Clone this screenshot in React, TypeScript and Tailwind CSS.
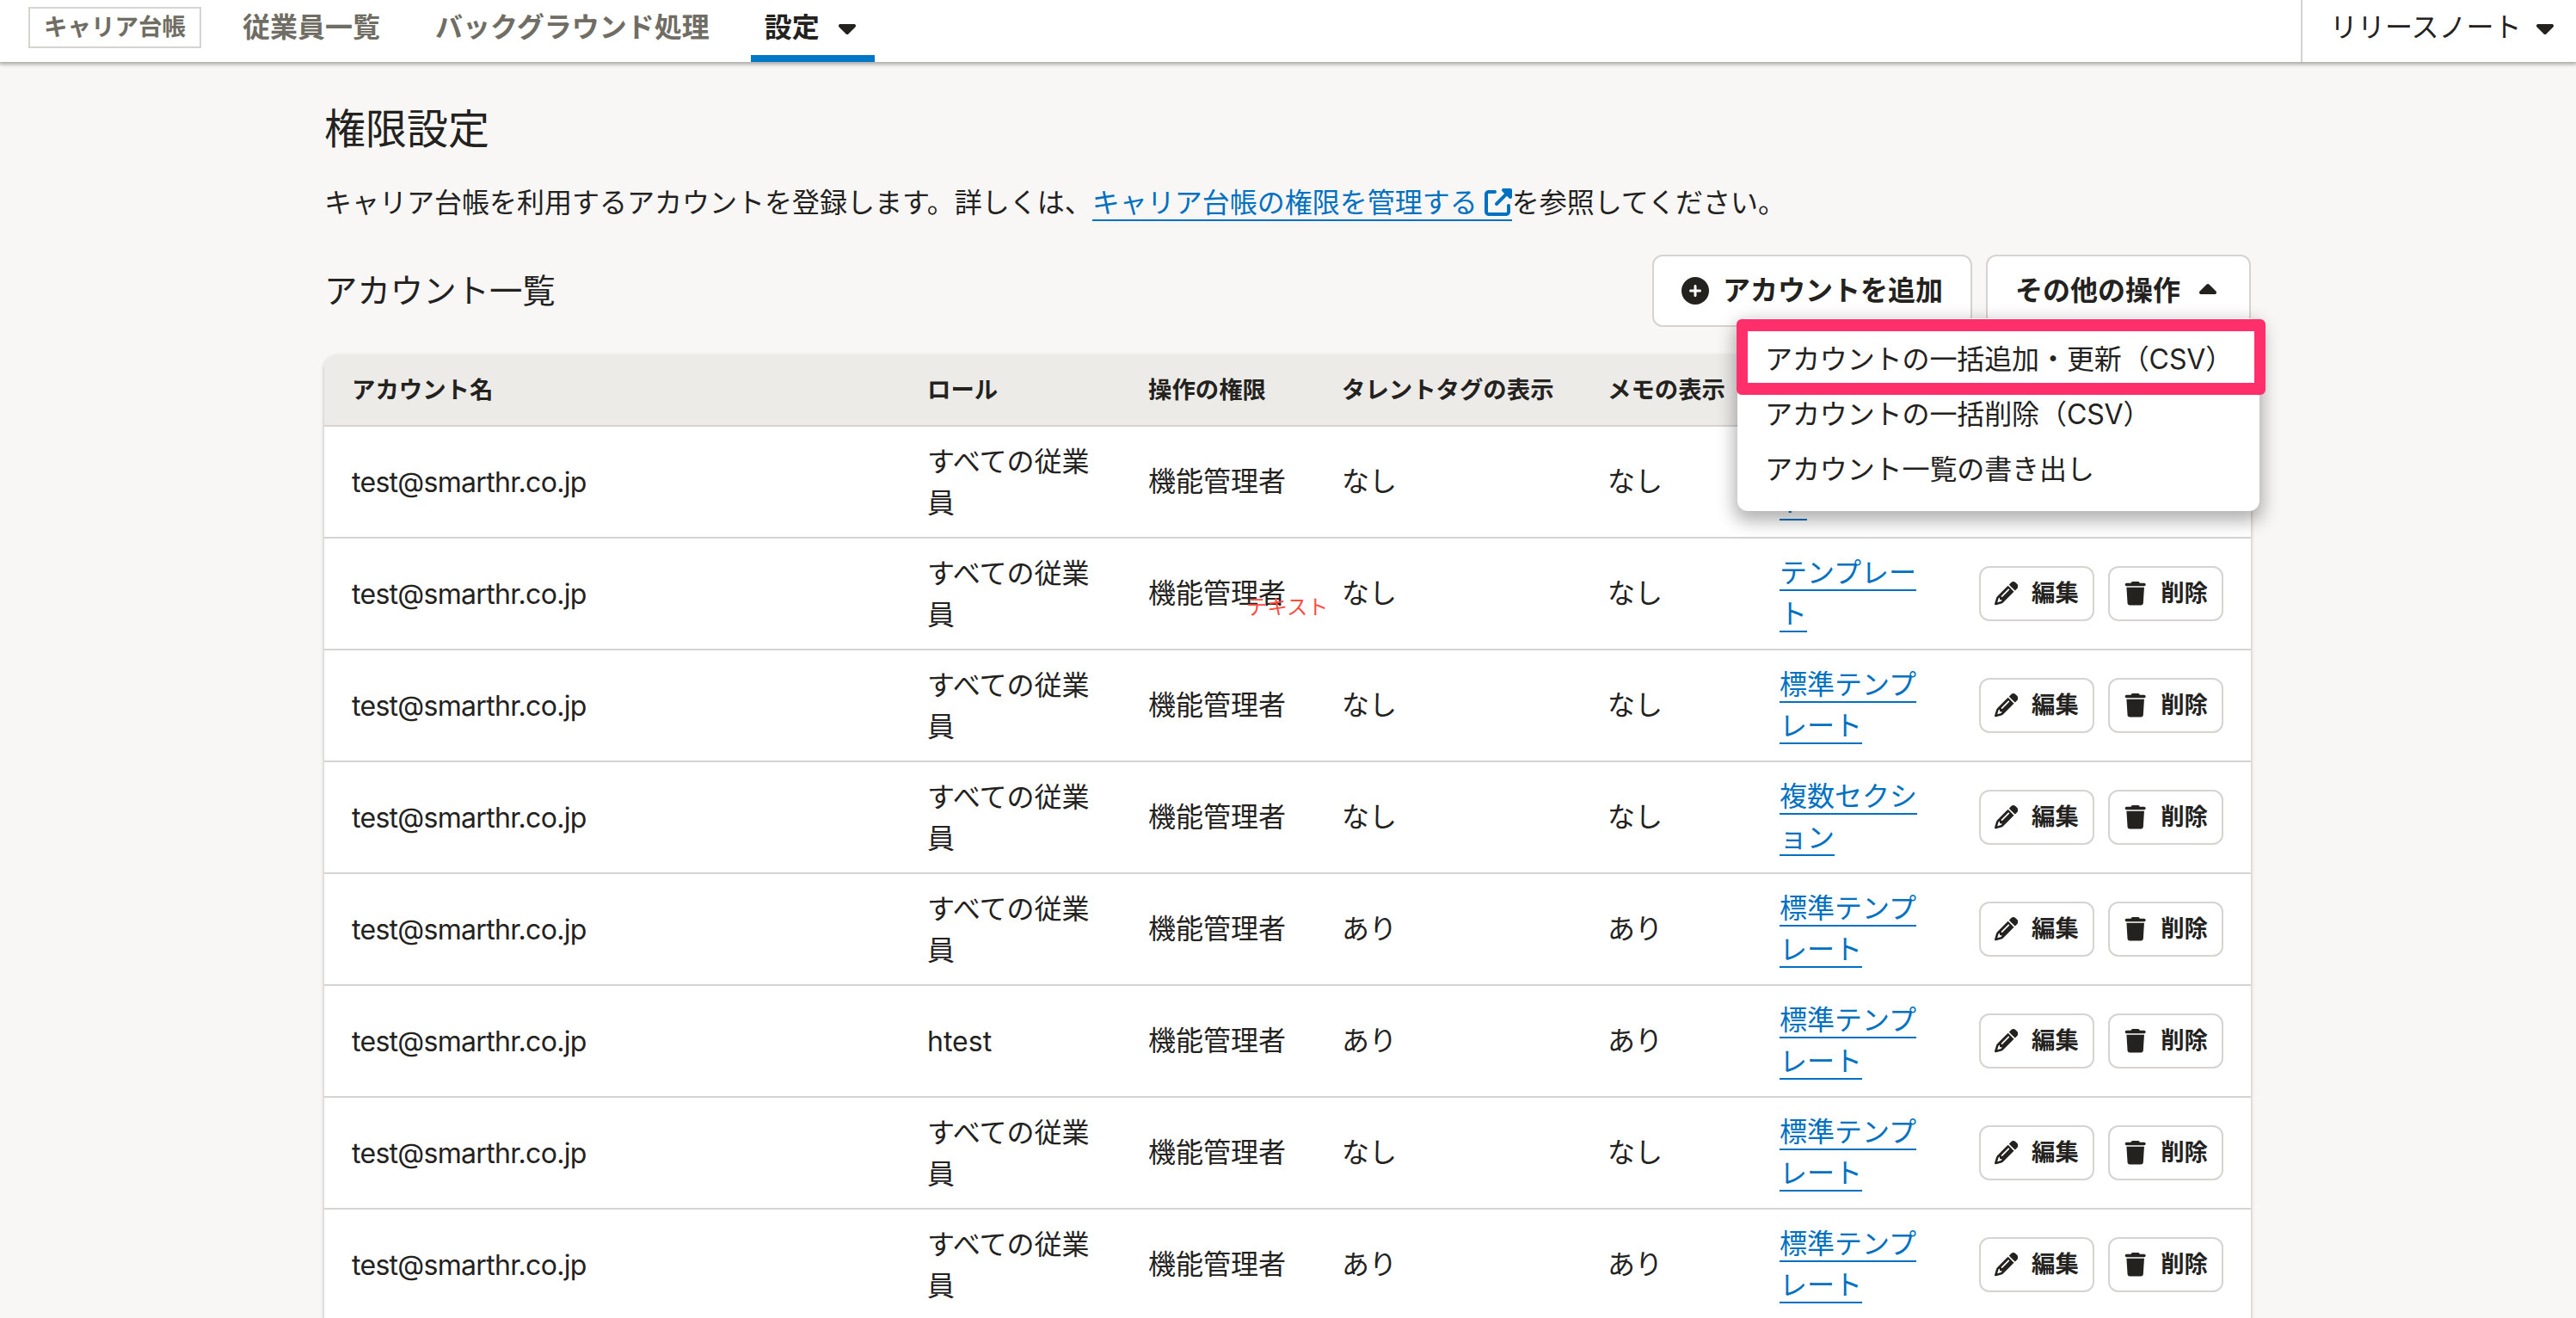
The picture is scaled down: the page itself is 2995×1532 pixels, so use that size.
import { ReactNode } from 'react';
import {
  FaCaretDown,
  FaCaretUp,
  FaCirclePlus,
  FaPencil,
  FaTrash,
  FaUpRightFromSquare,
} from 'react-icons/fa6';

type Account = {
  role: string;
  permission: string;
  talentTag: string;
  memo: string;
  template: string;
};

const columns = [
  'アカウント名',
  'ロール',
  '操作の権限',
  'タレントタグの表示',
  'メモの表示',
  '',
  '',
];

const accounts: Account[] = [
  { role: 'すべての従業員', permission: '機能管理者', talentTag: 'なし', memo: 'なし', template: 'テンプレート' },
  { role: 'すべての従業員', permission: '機能管理者', talentTag: 'なし', memo: 'なし', template: 'テンプレート' },
  { role: 'すべての従業員', permission: '機能管理者', talentTag: 'なし', memo: 'なし', template: '標準テンプレート' },
  { role: 'すべての従業員', permission: '機能管理者', talentTag: 'なし', memo: 'なし', template: '複数セクション' },
  { role: 'すべての従業員', permission: '機能管理者', talentTag: 'あり', memo: 'あり', template: '標準テンプレート' },
  { role: 'htest', permission: '機能管理者', talentTag: 'あり', memo: 'あり', template: '標準テンプレート' },
  { role: 'すべての従業員', permission: '機能管理者', talentTag: 'なし', memo: 'なし', template: '標準テンプレート' },
  { role: 'すべての従業員', permission: '機能管理者', talentTag: 'あり', memo: 'あり', template: '標準テンプレート' },
];

const menuItems = [
  'アカウントの一括追加・更新（CSV）',
  'アカウントの一括削除（CSV）',
  'アカウント一覧の書き出し',
];

function Header() {
  return (
    <header className="relative flex h-[72px] items-stretch bg-white shadow-[0_2px_4px_1px_rgba(3,3,2,0.3)]">
      <div className="flex h-16 items-center pl-[33px]">
        <span className="flex h-12 items-center border-2 border-[#d6d3d0] px-4 text-[27.5px] leading-none font-bold text-[#706d65]">
          キャリア台帳
        </span>
      </div>
      <nav className="ml-8 flex items-stretch font-bold leading-none text-[#706d65]">
        <a href="#" className="flex h-16 items-center px-4">
          従業員一覧
        </a>
        <a href="#" className="ml-8 flex h-16 items-center px-4">
          バックグラウンド処理
        </a>
        <a
          href="#"
          className="ml-8 flex w-36 items-center gap-4 border-b-8 border-[#0077c7] pl-4 text-[#23221e]"
        >
          設定
          <FaCaretDown className="size-8" />
        </a>
      </nav>
      <button className="ml-auto flex w-80 items-center border-l-2 border-[#d6d3d0] pb-2 pl-8 leading-none">
        リリースノート
        <FaCaretDown className="ml-3 size-8" />
      </button>
    </header>
  );
}

function SmallButton({ icon, children }: { icon: ReactNode; children: ReactNode }) {
  return (
    <button className="flex h-16 items-center gap-4 rounded-xl border-2 border-[#d6d3d0] bg-white px-4 text-[27.4px] leading-none font-bold whitespace-nowrap">
      {icon}
      {children}
    </button>
  );
}

function DropdownMenu() {
  return (
    <div className="absolute top-[74px] right-[-10px] z-10 h-56 w-[607px] rounded-xl bg-white pt-4 font-normal shadow-[0_8px_20px_4px_rgba(3,3,2,0.3)]">
      <ul>
        {menuItems.map((item) => (
          <li key={item} className="flex h-16 items-center pl-8 tracking-[-0.1px] whitespace-nowrap">
            {item}
          </li>
        ))}
      </ul>
      <div className="absolute top-px left-[-1px] h-[88px] w-[615px] rounded-md border-[14px] border-x-[13px] border-[#ff2f6c]" />
    </div>
  );
}

function AccountTable() {
  return (
    <div className="overflow-hidden rounded-t-2xl bg-white shadow-[0_2px_4px_rgba(3,3,2,0.3)]">
      <table className="w-full table-fixed border-separate border-spacing-0 text-left">
        <colgroup>
          <col className="w-[669px]" />
          <col className="w-[257px]" />
          <col className="w-[225px]" />
          <col className="w-[309px]" />
          <col className="w-[200px]" />
          <col className="w-[231px]" />
          <col className="w-[349px]" />
        </colgroup>
        <thead>
          <tr className="h-[84px] bg-[#edebe8] text-[27.4px]">
            {columns.map((column, idx) => (
              <th
                key={idx}
                className="border-b-2 border-[#d6d3d0] px-8 py-0 font-bold whitespace-nowrap"
              >
                {column}
              </th>
            ))}
          </tr>
        </thead>
        <tbody className="[&_td]:border-b-2 [&_td]:border-[#d6d3d0] [&_td]:px-8">
          {accounts.map((account, idx) => (
            <tr key={idx} className="h-[130px]">
              <td className="pt-0.5 tracking-[-0.7px]">test@smarthr.co.jp</td>
              <td className="pt-px">{account.role}</td>
              <td className="relative whitespace-nowrap">
                {account.permission}
                {idx === 1 && (
                  <span className="absolute top-[62px] left-[146px] text-2xl leading-9 text-[#ff4b3e]">
                    テキスト
                  </span>
                )}
              </td>
              <td>{account.talentTag}</td>
              <td>{account.memo}</td>
              <td className="break-all">
                <a href="#" className="border-b-2 border-[#0071c1] text-[#0071c1]">
                  {account.template}
                </a>
              </td>
              <td>
                <div className="flex justify-end gap-4">
                  <SmallButton icon={<FaPencil className="size-[27.4px]" />}>編集</SmallButton>
                  <SmallButton icon={<FaTrash className="size-[27.4px]" />}>削除</SmallButton>
                </div>
              </td>
            </tr>
          ))}
        </tbody>
      </table>
    </div>
  );
}

function App() {
  return (
    <div
      lang="ja"
      className="h-[1532px] overflow-hidden bg-[#f8f7f6] font-[Inter,'Noto_Sans_CJK_JP',sans-serif] text-[32px] leading-[48px] text-[#23221e]"
    >
      <Header />
      <main className="ml-[377px] w-[2240px] pt-[46px]">
        <h1 className="text-5xl leading-[64px]">権限設定</h1>
        <p className="mt-[30px] whitespace-nowrap">
          キャリア台帳を利用するアカウントを登録します。詳しくは、
          <a href="#" className="border-b-2 border-[#0071c1] text-[#0071c1]">
            キャリア台帳の権限を管理する
            <FaUpRightFromSquare className="ml-2 inline size-8 align-[-4px]" />
          </a>
          を参照してください。
        </p>
        <div className="mt-9 flex items-center justify-between">
          <h2 className="text-[38.4px]">アカウント一覧</h2>
          <div className="relative flex gap-4 font-bold">
            <button className="flex h-[84px] items-center gap-4 rounded-xl border-2 border-[#d6d3d0] bg-white px-8">
              <FaCirclePlus className="size-8" />
              アカウントを追加
            </button>
            <button className="flex h-[84px] items-center gap-4 rounded-xl border-2 border-[#d6d3d0] bg-white px-8">
              その他の操作
              <FaCaretUp className="size-8" />
            </button>
            <DropdownMenu />
          </div>
        </div>
        <div className="mt-8">
          <AccountTable />
        </div>
      </main>
    </div>
  );
}

export default App;
